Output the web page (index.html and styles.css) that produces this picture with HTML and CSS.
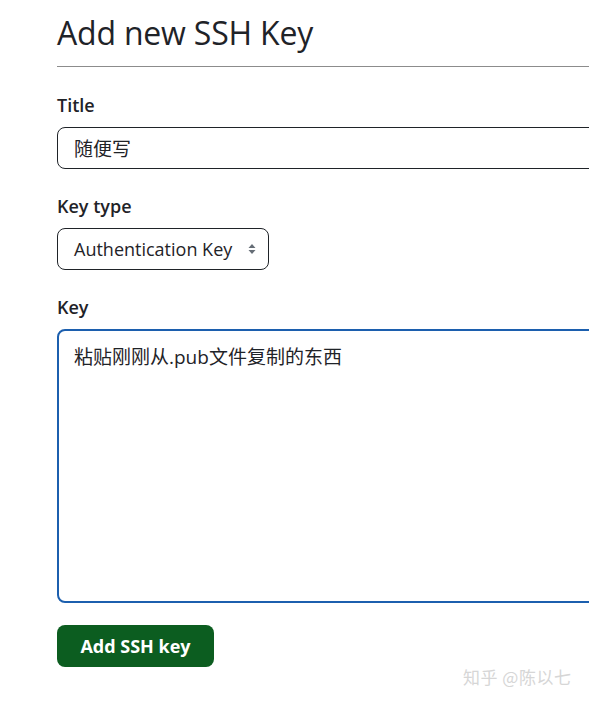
FILE: index.html
```html
<!DOCTYPE html>
<html lang="zh">
<head>
<meta charset="utf-8">
<link rel="stylesheet" href="styles.css">
</head>
<body>
<main class="page">
  <h1 class="title">Add new SSH Key</h1>
  <div class="group">
    <label class="label">Title</label>
    <div class="input cjk">随便写</div>
  </div>
  <div class="group">
    <label class="label">Key type</label>
    <div class="select">
      <span>Authentication Key</span>
      <svg class="arrows" width="10" height="14" viewBox="0 0 10 14"><path d="M1.5 6 L5 2 L8.5 6 Z M1.5 8 L5 12 L8.5 8 Z" fill="#656d76"/></svg>
    </div>
  </div>
  <div class="group">
    <label class="label">Key</label>
    <div class="textarea cjk">粘贴刚刚从.pub文件复制的东西</div>
  </div>
  <button class="btn">Add SSH key</button>
</main>
<div class="watermark">知乎 @陈以七</div>
</body>
</html>
```

FILE: styles.css
```css
html, body {
  margin: 0;
  padding: 0;
  background: #fff;
  overflow: hidden;
  width: 589px;
  height: 703px;
}
body {
  position: relative;
  font-family: "Open Sans", "Noto Sans CJK SC", sans-serif;
  color: #1f2328;
}
.page {
  padding: 10px 0 0 57px;
  width: 532px;
  overflow: hidden;
}
.title {
  margin: 0;
  font-size: 32px;
  font-weight: 400;
  line-height: 46px;
  padding-bottom: 10px;
  border-bottom: 1px solid #8c8c8c;
  letter-spacing: -0.2px;
  white-space: nowrap;
}
.group {
  display: flex;
  flex-direction: column;
  gap: 10px;
  margin-top: 25px;
}
.group:first-of-type { margin-top: 26px; }
.label {
  font-size: 18px;
  font-weight: 600;
  line-height: 24px;
}
.input, .select, .textarea {
  box-sizing: border-box;
  border: 1px solid #1f2328;
  border-radius: 8px;
  font-size: 18px;
  padding: 0 16px;
  font-family: "Open Sans", "Noto Sans CJK SC", sans-serif;
}
.cjk {
  font-size: 19px;
}
.input {
  height: 42px;
  width: 600px;
  display: flex;
  align-items: center;
}
.select {
  width: 212px;
  height: 42px;
  display: flex;
  align-items: center;
  justify-content: space-between;
  padding-right: 11px;
}
.textarea {
  width: 600px;
  height: 274px;
  border: 2px solid #1c5fae;
  padding: 14px 15px;
  line-height: 24px;
  font-size: 19px;
}
.btn {
  margin-top: 22px;
  background: #0c5d20;
  color: #fff;
  border: none;
  border-radius: 8px;
  height: 42px;
  width: 157px;
  font-family: "Open Sans", sans-serif;
  font-size: 18px;
  font-weight: 700;
  padding: 0;
}
.watermark {
  position: absolute;
  left: 463px;
  top: 664px;
  font-family: "Noto Sans CJK SC", sans-serif;
  font-size: 17px;
  color: #d6d6d6;
  letter-spacing: 0.5px;
}
```
